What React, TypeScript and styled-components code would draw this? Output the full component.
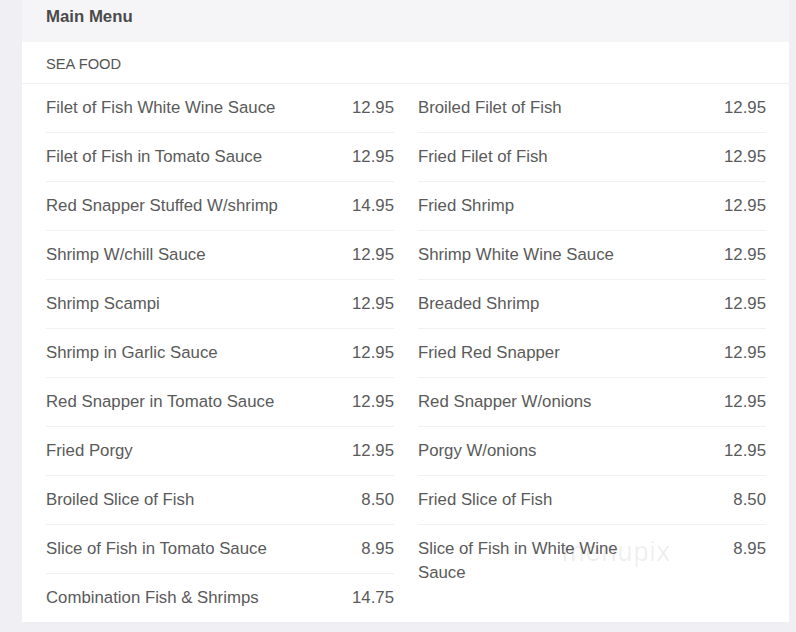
import React from "react";
import styled, { createGlobalStyle } from "styled-components";

interface Item {
	name: string;
	price: string;
}

const leftItems: Item[] = [
	{ name: "Filet of Fish White Wine Sauce", price: "12.95" },
	{ name: "Filet of Fish in Tomato Sauce", price: "12.95" },
	{ name: "Red Snapper Stuffed W/shrimp", price: "14.95" },
	{ name: "Shrimp W/chill Sauce", price: "12.95" },
	{ name: "Shrimp Scampi", price: "12.95" },
	{ name: "Shrimp in Garlic Sauce", price: "12.95" },
	{ name: "Red Snapper in Tomato Sauce", price: "12.95" },
	{ name: "Fried Porgy", price: "12.95" },
	{ name: "Broiled Slice of Fish", price: "8.50" },
	{ name: "Slice of Fish in Tomato Sauce", price: "8.95" },
	{ name: "Combination Fish & Shrimps", price: "14.75" },
];

const rightItems: Item[] = [
	{ name: "Broiled Filet of Fish", price: "12.95" },
	{ name: "Fried Filet of Fish", price: "12.95" },
	{ name: "Fried Shrimp", price: "12.95" },
	{ name: "Shrimp White Wine Sauce", price: "12.95" },
	{ name: "Breaded Shrimp", price: "12.95" },
	{ name: "Fried Red Snapper", price: "12.95" },
	{ name: "Red Snapper W/onions", price: "12.95" },
	{ name: "Porgy W/onions", price: "12.95" },
	{ name: "Fried Slice of Fish", price: "8.50" },
	{ name: "Slice of Fish in White Wine Sauce", price: "8.95" },
];

const MenuColumn = ({ items }: { items: Item[] }): JSX.Element => (
	<Column>
		{items.map((item) => (
			<Row key={item.name}>
				<Name>{item.name}</Name>
				<Price>{item.price}</Price>
			</Row>
		))}
	</Column>
);

const App = (): JSX.Element => {
	return (
		<>
			<GlobalStyle />
			<Page>
				<Card>
					<Header>Main Menu</Header>
					<Section>SEA FOOD</Section>
					<Columns>
						<MenuColumn items={leftItems} />
						<MenuColumn items={rightItems} />
						<Watermark>menupix</Watermark>
					</Columns>
				</Card>
			</Page>
		</>
	);
};

export default App;

const GlobalStyle = createGlobalStyle`
	body {
		margin: 0;
		background: #efeff4;
		font-family: "Liberation Sans", Arial, sans-serif;
	}
`;

const Page = styled.div`
	height: 632px;
	padding: 0 7px 0 22px;
	box-sizing: border-box;
`;

const Card = styled.div`
	background: #ffffff;
	width: 767px;
`;

const Header = styled.div`
	height: 42px;
	box-sizing: border-box;
	padding: 7px 24px 0;
	line-height: 20px;
	font-size: 16.8px;
	font-weight: bold;
	color: #4a4a4a;
	background: #f5f5f8;
`;

const Section = styled.div`
	padding: 13px 24px 10px;
	line-height: 18px;
	font-size: 14.7px;
	color: #555555;
	border-bottom: 1px solid #f1f1f3;
`;

const Columns = styled.div`
	position: relative;
	display: grid;
	grid-template-columns: 348px 348px;
	column-gap: 24px;
	padding: 0 23px 0 24px;
	align-items: start;
`;

const Column = styled.div`
	display: flex;
	flex-direction: column;
`;

const Row = styled.div`
	display: flex;
	justify-content: space-between;
	align-items: flex-start;
	gap: 16px;
	padding: 12px 0;
	line-height: 24px;
	font-size: 16.8px;
	color: #5a5a5a;
	border-bottom: 1px solid #f1f1f3;

	&:last-child {
		border-bottom: none;
	}
`;

const Name = styled.span`
	max-width: 240px;
`;

const Price = styled.span`
	white-space: nowrap;
`;

const Watermark = styled.span`
	position: absolute;
	left: 540px;
	top: 453px;
	font-size: 27px;
	letter-spacing: 1px;
	color: rgba(0, 0, 0, 0.08);
	pointer-events: none;
`;
